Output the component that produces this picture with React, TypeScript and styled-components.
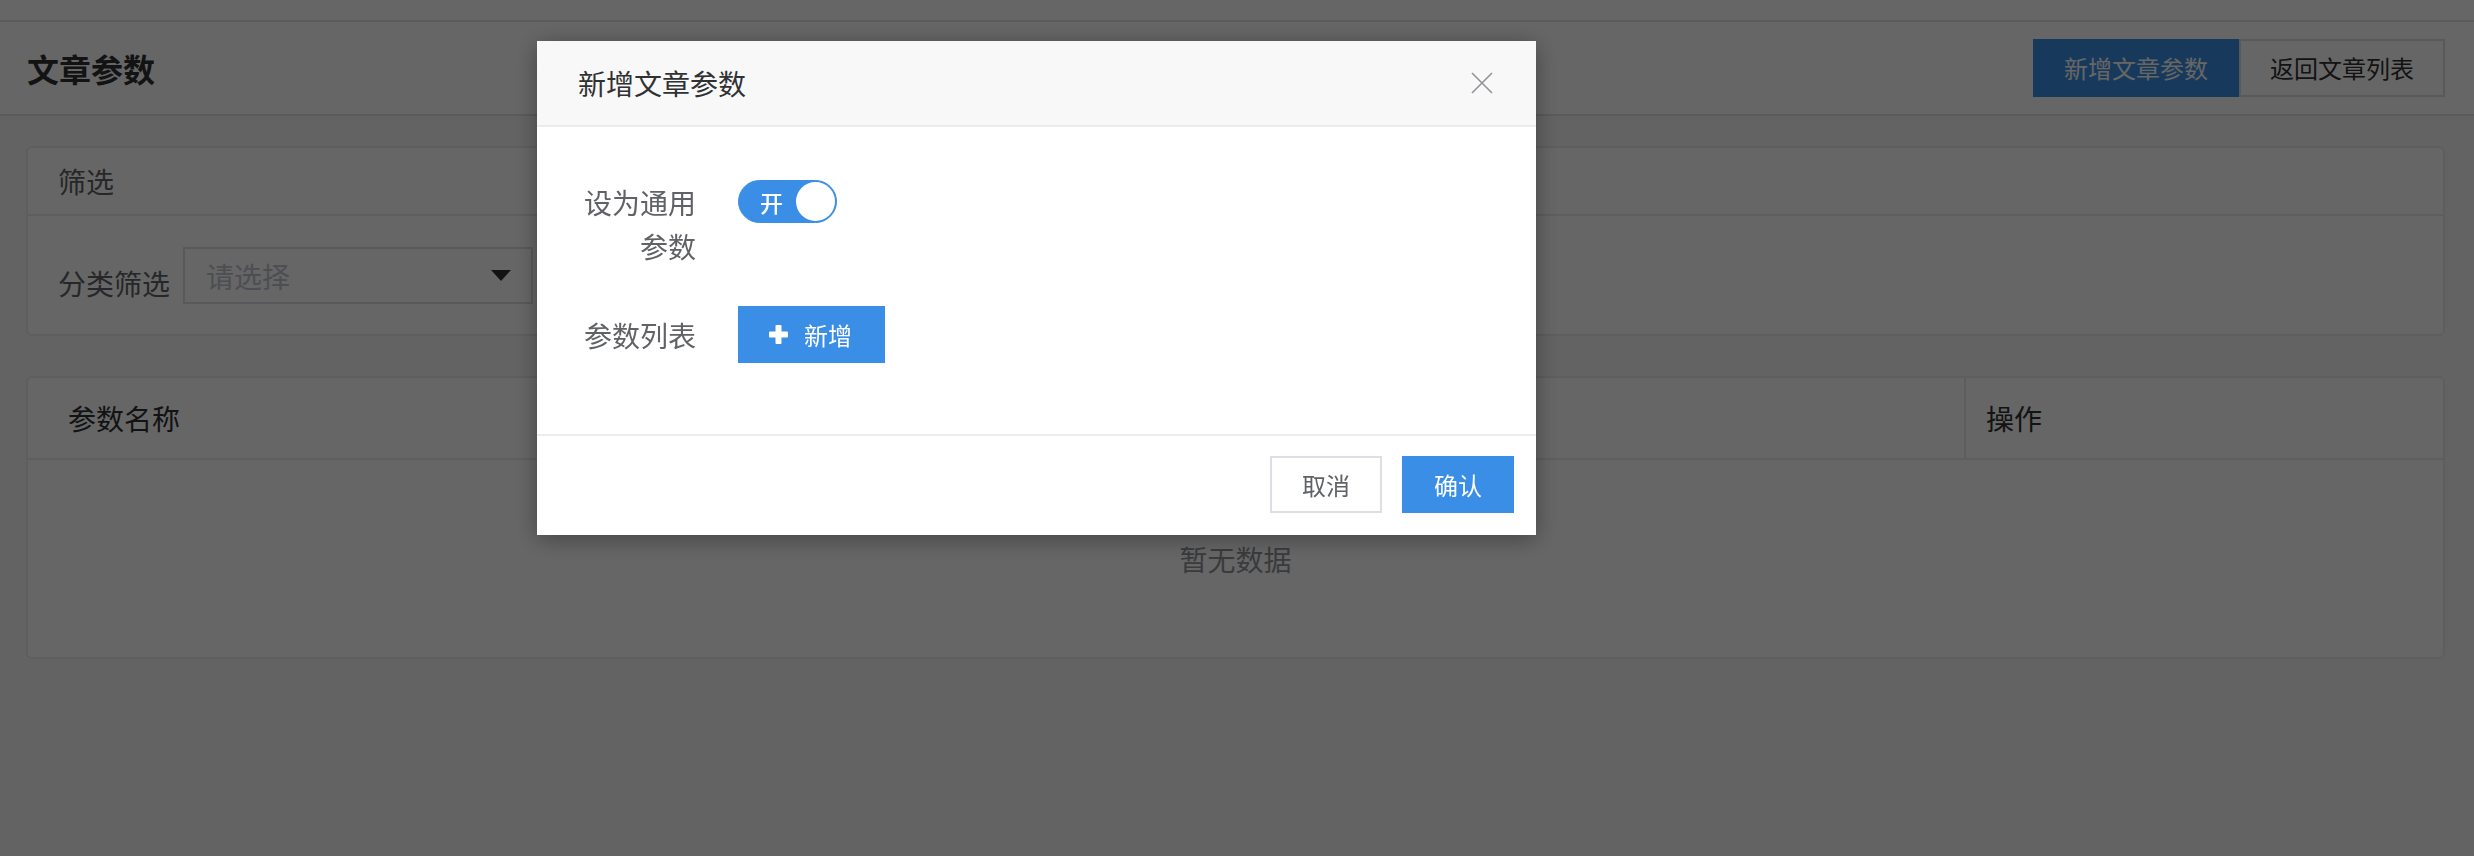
import styled, { createGlobalStyle } from "styled-components";

const GlobalStyle = createGlobalStyle`
  html, body {
    margin: 0;
    padding: 0;
    background: #ffffff;
    font-family: "Noto Sans CJK SC", "Noto Sans", sans-serif;
  }
  * {
    box-sizing: border-box;
  }
`;

const Page = styled.div`
  min-height: 100vh;
  background: #f8f8f9;
`;

const TopStrip = styled.div`
  height: 22px;
  background: #ffffff;
  border-bottom: 2px solid #e2e2e2;
`;

const PageHeader = styled.header`
  height: 94px;
  display: flex;
  align-items: center;
  justify-content: space-between;
  padding: 0 29px 0 27px;
  background: #ffffff;
  border-bottom: 2px solid #e2e2e2;
`;

const PageTitle = styled.h1`
  margin: 0;
  font-size: 32px;
  line-height: 40px;
  font-weight: 700;
  color: #303133;
`;

const HeaderActions = styled.div`
  display: flex;
`;

const HeaderButton = styled.button<{ $primary?: boolean }>`
  height: 58px;
  padding: 0 29px;
  font-family: inherit;
  font-size: 24px;
  line-height: 1;
  border: 2px solid ${({ $primary }) => ($primary ? "#3a8ee6" : "#dcdfe6")};
  background: ${({ $primary }) => ($primary ? "#3a8ee6" : "#ffffff")};
  color: ${({ $primary }) => ($primary ? "#ffffff" : "#303133")};
  cursor: pointer;
`;

const Content = styled.main`
  display: flex;
  flex-direction: column;
  gap: 40px;
  padding: 30px 29px 0 26px;
`;

const Panel = styled.section`
  background: #ffffff;
  border: 2px solid #ebebeb;
  border-radius: 6px;
`;

const PanelHeader = styled.div`
  height: 68px;
  display: flex;
  align-items: center;
  padding-left: 30px;
  font-size: 28px;
  color: #606266;
  border-bottom: 2px solid #ebebeb;
`;

const PanelBody = styled.div`
  display: flex;
  align-items: center;
  gap: 13px;
  padding: 31px 30px 30px;
`;

const FilterLabel = styled.span`
  font-size: 28px;
  line-height: 40px;
  color: #606266;
  padding-top: 14px;
`;

const SelectBox = styled.div`
  width: 350px;
  height: 57px;
  display: flex;
  align-items: center;
  justify-content: space-between;
  padding: 0 20px 0 21px;
  border: 2px solid #dcdfe6;
  background: #ffffff;
  font-size: 28px;
  color: #c0c4cc;
`;

const Arrow = styled.span`
  width: 0;
  height: 0;
  border-left: 10px solid transparent;
  border-right: 10px solid transparent;
  border-top: 11px solid #303133;
`;

const HeadRow = styled.div`
  display: grid;
  grid-template-columns: 1fr 479px;
  height: 82px;
  border-bottom: 2px solid #ebebeb;
`;

const HeadCell = styled.div<{ $pad: number; $divider?: boolean }>`
  display: flex;
  align-items: center;
  padding-left: ${({ $pad }) => $pad}px;
  font-size: 28px;
  color: #303133;
  border-left: ${({ $divider }) => ($divider ? "2px solid #ebebeb" : "none")};
`;

const EmptyRow = styled.div`
  height: 197px;
  display: flex;
  align-items: center;
  justify-content: center;
  font-size: 28px;
  color: #909399;
`;

const Overlay = styled.div`
  position: fixed;
  inset: 0;
  background: rgba(0, 0, 0, 0.6);
`;

const Dialog = styled.div`
  position: fixed;
  left: 537px;
  top: 41px;
  width: 999px;
  background: #ffffff;
  box-shadow: 0 4px 22px rgba(0, 0, 0, 0.35);
`;

const DialogHeader = styled.div`
  height: 86px;
  display: flex;
  align-items: center;
  justify-content: space-between;
  padding: 0 43px 0 41px;
  background: #f8f8f8;
  border-bottom: 2px solid #ececec;
`;

const DialogTitle = styled.span`
  font-size: 28px;
  color: #303133;
`;

const CloseButton = styled.button`
  width: 22px;
  height: 22px;
  padding: 0;
  border: none;
  background: transparent;
  display: flex;
  cursor: pointer;
`;

const DialogBody = styled.div`
  padding: 53px 40px 33px;
`;

const FormItem = styled.div<{ $center?: boolean }>`
  display: flex;
  align-items: ${({ $center }) => ($center ? "center" : "flex-start")};
  margin-bottom: 38px;
`;

const FormLabel = styled.label`
  flex-shrink: 0;
  width: 131px;
  padding-right: 12px;
  text-align: right;
  font-size: 28px;
  line-height: 44px;
  color: #606266;
`;

const FormControl = styled.div`
  margin-left: 30px;
  display: flex;
`;

const Switch = styled.div`
  position: relative;
  width: 99px;
  height: 43px;
  border-radius: 22px;
  background: #3a8ee6;
  border: 1px solid #3a8ee6;
  display: flex;
  align-items: center;
  padding-left: 21px;
  color: #ffffff;
  font-size: 23px;
  font-weight: 500;
`;

const Knob = styled.span`
  position: absolute;
  right: 1px;
  top: 1px;
  width: 39px;
  height: 39px;
  border-radius: 50%;
  background: #ffffff;
`;

const AddButton = styled.button`
  height: 57px;
  display: flex;
  align-items: center;
  gap: 16px;
  padding: 0 33px 0 31px;
  border: none;
  background: #3a8ee6;
  color: #ffffff;
  font-family: inherit;
  font-size: 24px;
  cursor: pointer;
`;

const DialogFooter = styled.div`
  display: flex;
  justify-content: flex-end;
  gap: 20px;
  padding: 20px 22px 22px;
  border-top: 2px solid #ececec;
`;

const FooterButton = styled.button<{ $primary?: boolean }>`
  width: 112px;
  height: 57px;
  font-family: inherit;
  font-size: 24px;
  border: 2px solid ${({ $primary }) => ($primary ? "#3a8ee6" : "#dcdfe6")};
  background: ${({ $primary }) => ($primary ? "#3a8ee6" : "#ffffff")};
  color: ${({ $primary }) => ($primary ? "#ffffff" : "#606266")};
  cursor: pointer;
`;

export default function App() {
  return (
    <>
      <GlobalStyle />
      <Page>
        <TopStrip />
        <PageHeader>
          <PageTitle>文章参数</PageTitle>
          <HeaderActions>
            <HeaderButton $primary>新增文章参数</HeaderButton>
            <HeaderButton>返回文章列表</HeaderButton>
          </HeaderActions>
        </PageHeader>
        <Content>
          <Panel>
            <PanelHeader>筛选</PanelHeader>
            <PanelBody>
              <FilterLabel>分类筛选</FilterLabel>
              <SelectBox>
                请选择
                <Arrow />
              </SelectBox>
            </PanelBody>
          </Panel>
          <Panel>
            <HeadRow>
              <HeadCell $pad={40}>参数名称</HeadCell>
              <HeadCell $pad={20} $divider>
                操作
              </HeadCell>
            </HeadRow>
            <EmptyRow>暂无数据</EmptyRow>
          </Panel>
        </Content>
      </Page>

      <Overlay />
      <Dialog>
        <DialogHeader>
          <DialogTitle>新增文章参数</DialogTitle>
          <CloseButton aria-label="关闭">
            <svg width="22" height="22" viewBox="0 0 22 22">
              <path d="M1 1 L21 21 M21 1 L1 21" stroke="#909399" strokeWidth="1.6" fill="none" />
            </svg>
          </CloseButton>
        </DialogHeader>
        <DialogBody>
          <FormItem>
            <FormLabel>设为通用参数</FormLabel>
            <FormControl>
              <Switch>
                开
                <Knob />
              </Switch>
            </FormControl>
          </FormItem>
          <FormItem $center>
            <FormLabel>参数列表</FormLabel>
            <FormControl>
              <AddButton>
                <svg width="19" height="19" viewBox="0 0 19 19">
                  <rect x="6.5" y="0" width="6" height="19" rx="1" fill="#ffffff" />
                  <rect x="0" y="6.5" width="19" height="6" rx="1" fill="#ffffff" />
                </svg>
                新增
              </AddButton>
            </FormControl>
          </FormItem>
        </DialogBody>
        <DialogFooter>
          <FooterButton>取消</FooterButton>
          <FooterButton $primary>确认</FooterButton>
        </DialogFooter>
      </Dialog>
    </>
  );
}
